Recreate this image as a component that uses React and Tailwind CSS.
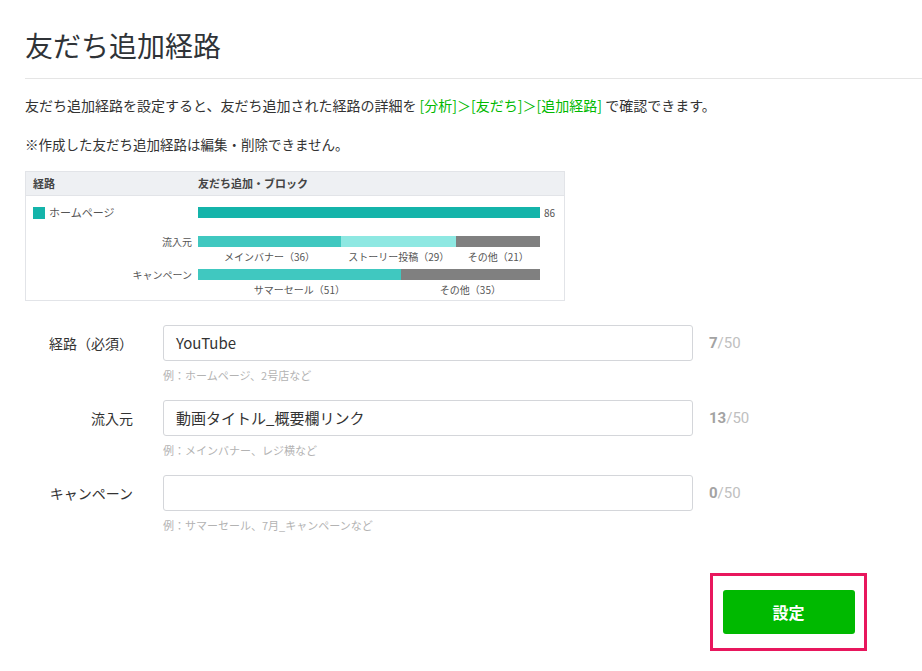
import React from "react";

const FONT = { fontFamily: '"Noto Sans CJK JP", "Noto Sans", sans-serif' };

function Segments({ parts }) {
  const total = 86;
  return (
    <div className="flex flex-col">
      <div className="flex h-[11px] w-[342px]">
        {parts.map((p, i) => (
          <div key={i} className="h-full" style={{ width: `${(p.v / total) * 342}px`, background: p.c }} />
        ))}
      </div>
      <div className="flex w-[342px] mt-[3px]">
        {parts.map((p, i) => (
          <div key={i} className="text-center text-[10px] leading-[13px] text-[#555] whitespace-nowrap" style={{ width: `${(p.v / total) * 342}px` }}>
            {p.label}
          </div>
        ))}
      </div>
    </div>
  );
}

function FormRow({ label, value, hint, count }) {
  return (
    <div className="flex items-start">
      <div className="w-[108px] h-[36px] flex items-center justify-end text-[14px] text-[#333]">{label}</div>
      <div className="ml-[30px] w-[530px]">
        <div className="h-[36px] border border-[#d4d6da] rounded-[3px] flex items-center pl-[12px] text-[15px] text-[#333]">{value}</div>
        <div className="mt-[7px] text-[11px] leading-[14px] text-[#b3b3b3]">{hint}</div>
      </div>
      <div className="ml-[16px] h-[36px] flex items-center text-[15px]" style={{ fontFamily: '"Roboto", "Noto Sans", sans-serif' }}>
        <span className="font-bold text-[#a3a3a3]">{count}</span>
        <span className="text-[#c0c0c0]">/50</span>
      </div>
    </div>
  );
}

export default function App() {
  const green = "text-[#00b900]";
  return (
    <div className="bg-white min-h-[671px] pl-[25px] text-[#333]" style={FONT}>
      <div className="pt-[28px] pb-[16px] border-b border-[#e5e5e5]">
        <h1 className="text-[28px] leading-[34px] text-[#2f3337] font-normal">友だち追加経路</h1>
      </div>
      <p className="mt-[16px] text-[14px] leading-[20px]">
        友だち追加経路を設定すると、友だち追加された経路の詳細を{" "}
        <span className={green}>[分析]＞[友だち]＞[追加経路]</span> で確認できます。
      </p>
      <p className="mt-[19px] text-[13.5px] leading-[20px]">※作成した友だち追加経路は編集・削除できません。</p>

      <div className="mt-[17px] w-[540px] h-[130px] border border-[#e2e4e8]">
        <div className="h-[24px] bg-[#eef0f3] border-b border-[#e2e4e8] flex items-center text-[11px] font-bold text-[#444]">
          <div className="w-[172px] pl-[7px]">経路</div>
          <div>友だち追加・ブロック</div>
        </div>
        <div className="pt-[11px]">
          <div className="flex items-center h-[11px]">
            <div className="w-[172px] pl-[7px] flex items-center">
              <div className="w-[12px] h-[12px] bg-[#14b4aa]" />
              <span className="ml-[4px] text-[11px] text-[#555]">ホームページ</span>
            </div>
            <div className="w-[342px] h-[11px] bg-[#14b4aa]" />
            <span className="ml-[4px] text-[10px] text-[#555]">86</span>
          </div>
          <div className="flex items-start mt-[18px]">
            <div className="w-[166px] h-[11px] flex items-center justify-end text-[10px] text-[#555]">流入元</div>
            <div className="ml-[6px]">
              <Segments
                parts={[
                  { v: 36, c: "#40c8c0", label: "メインバナー（36）" },
                  { v: 29, c: "#8ee8e2", label: "ストーリー投稿（29）" },
                  { v: 21, c: "#808080", label: "その他（21）" },
                ]}
              />
            </div>
          </div>
          <div className="flex items-start mt-[6px]">
            <div className="w-[166px] h-[11px] flex items-center justify-end text-[10px] text-[#555]">キャンペーン</div>
            <div className="ml-[6px]">
              <Segments
                parts={[
                  { v: 51, c: "#40c8c0", label: "サマーセール（51）" },
                  { v: 35, c: "#808080", label: "その他（35）" },
                ]}
              />
            </div>
          </div>
        </div>
      </div>

      <div className="mt-[24px] flex flex-col gap-[18px]">
        <FormRow label="経路（必須）" value="YouTube" hint="例：ホームページ、2号店など" count="7" />
        <FormRow label="流入元" value="動画タイトル_概要欄リンク" hint="例：メインバナー、レジ横など" count="13" />
        <FormRow label="キャンペーン" value="" hint="例：サマーセール、7月_キャンペーンなど" count="0" />
      </div>

      <div className="mt-[41px] ml-[685px] w-[157px] h-[78px] border-[3px] border-[#e8175d] flex items-center justify-center">
        <button className="w-[132px] h-[44px] bg-[#00b900] rounded-[3px] text-white font-bold text-[16px]">設定</button>
      </div>
    </div>
  );
}
